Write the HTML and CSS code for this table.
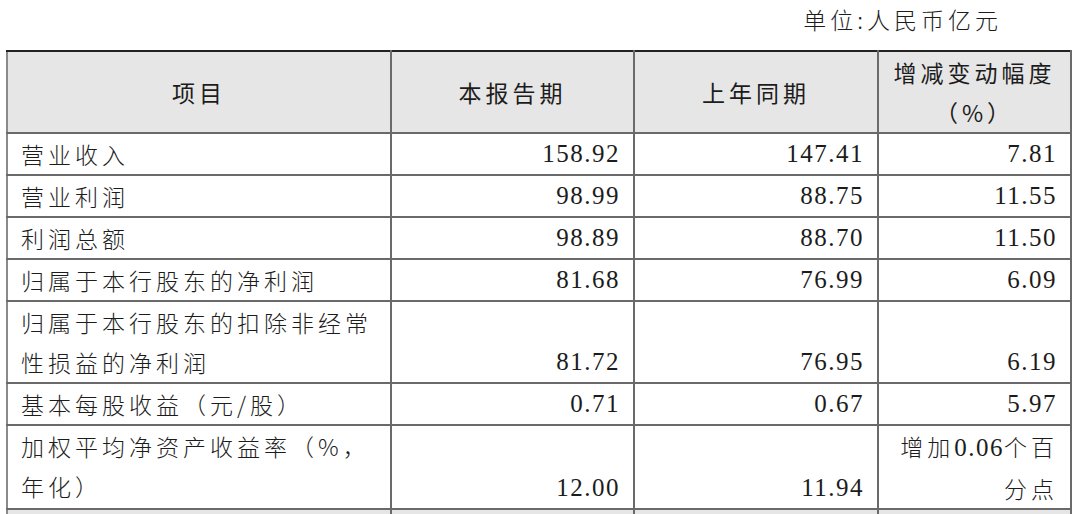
FILE: index.html
```html
<!DOCTYPE html>
<html lang="zh">
<head>
<meta charset="utf-8">
<link rel="stylesheet" href="styles.css">
</head>
<body>
<div class="unit">单位:人民币亿元</div>
<table class="fin">
  <colgroup>
    <col class="c1"><col class="c2"><col class="c3"><col class="c4">
  </colgroup>
  <thead>
    <tr>
      <th>项目</th>
      <th>本报告期</th>
      <th>上年同期</th>
      <th>增减变动幅度<br>（%）</th>
    </tr>
  </thead>
  <tbody>
    <tr><td class="lbl">营业收入</td><td class="num">158.92</td><td class="num">147.41</td><td class="num">7.81</td></tr>
    <tr><td class="lbl">营业利润</td><td class="num">98.99</td><td class="num">88.75</td><td class="num">11.55</td></tr>
    <tr><td class="lbl">利润总额</td><td class="num">98.89</td><td class="num">88.70</td><td class="num">11.50</td></tr>
    <tr><td class="lbl">归属于本行股东的净利润</td><td class="num">81.68</td><td class="num">76.99</td><td class="num">6.09</td></tr>
    <tr><td class="lbl">归属于本行股东的扣除非经常<br>性损益的净利润</td><td class="num">81.72</td><td class="num">76.95</td><td class="num">6.19</td></tr>
    <tr><td class="lbl">基本每股收益（元/股）</td><td class="num">0.71</td><td class="num">0.67</td><td class="num">5.97</td></tr>
    <tr><td class="lbl">加权平均净资产收益率（%，<br>年化）</td><td class="num">12.00</td><td class="num">11.94</td><td class="num txt">增加<span class="dig">0.06</span>个百<br>分点</td></tr>
    <tr class="shade"><td></td><td></td><td></td><td></td></tr>
  </tbody>
</table>
</body>
</html>
```

FILE: styles.css
```css
html, body {
  margin: 0;
  padding: 0;
  background: #ffffff;
}
body {
  width: 1080px;
  height: 514px;
  overflow: hidden;
  color: #1c1c1c;
  font-family: "Noto Sans CJK SC", "Noto Sans", sans-serif;
  font-weight: 300;
}
.unit {
  height: 50px;
  box-sizing: border-box;
  padding: 5px 78px 0 0;
  text-align: right;
  font-size: 23px;
  line-height: 28px;
  letter-spacing: 4px;
}
.fin {
  margin-left: 6px;
  width: 1064px;
  table-layout: fixed;
  border-collapse: collapse;
}
.c1 { width: 384px; }
.c2 { width: 243px; }
.c3 { width: 244px; }
.c4 { width: 193px; }
.fin th, .fin td {
  border: 2px solid #6a6a6a;
  padding: 0;
  font-size: 23px;
  line-height: 40px;
  letter-spacing: 4px;
  font-weight: 300;
}
.fin thead th {
  background: #e6e6e6;
  text-align: center;
  height: 80px;
  border-top-color: #222222;
  font-weight: 400;
}
.fin thead th:first-child { border-left-color: #8a8a8a; }
.fin td:first-child { border-left-color: #8a8a8a; }
.lbl {
  padding-left: 13px !important;
  text-align: left;
  vertical-align: top;
}
.num {
  text-align: right;
  vertical-align: bottom;
  padding-right: 13px !important;
  font-family: "Liberation Serif", "Noto Sans CJK SC", serif;
  font-size: 25px !important;
  font-weight: 400 !important;
  letter-spacing: 1.5px !important;
}
.num.txt {
  font-family: "Noto Sans CJK SC", sans-serif;
  font-size: 23px !important;
  font-weight: 300 !important;
  letter-spacing: 4px !important;
  padding-right: 12px !important;
}
.dig {
  font-family: "Liberation Serif", serif;
  font-size: 25px;
  font-weight: 400;
  letter-spacing: 1.5px;
}
.shade td {
  background: #e6e6e6;
  height: 8px;
  line-height: 8px;
}
```
